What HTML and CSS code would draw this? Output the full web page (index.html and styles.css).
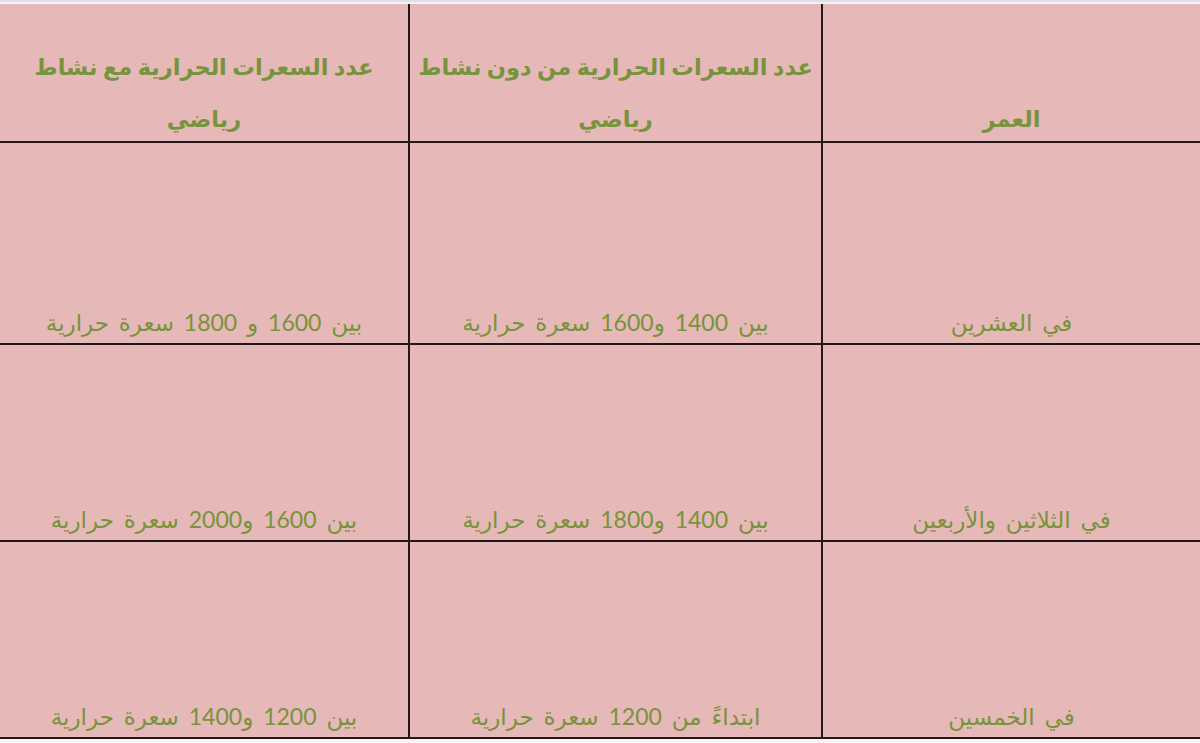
FILE: index.html
```html
<!DOCTYPE html>
<html lang="ar" dir="rtl">
<head>
<meta charset="utf-8">
<title>السعرات الحرارية حسب العمر</title>
<link rel="stylesheet" href="styles.css">
</head>
<body>
<div class="sheet">
  <div class="grid">
    <div class="cell head"><span>العمر</span></div>
    <div class="cell head two"><span>عدد السعرات الحرارية من دون نشاط<br>رياضي</span></div>
    <div class="cell head two"><span>عدد السعرات الحرارية مع نشاط<br>رياضي</span></div>

    <div class="cell"><span>في العشرين</span></div>
    <div class="cell"><span>بين 1400 و1600 سعرة حرارية</span></div>
    <div class="cell"><span>بين 1600 و 1800 سعرة حرارية</span></div>

    <div class="cell"><span>في الثلاثين والأربعين</span></div>
    <div class="cell"><span>بين 1400 و1800 سعرة حرارية</span></div>
    <div class="cell"><span>بين 1600 و2000 سعرة حرارية</span></div>

    <div class="cell"><span>في الخمسين</span></div>
    <div class="cell"><span>ابتداءً من 1200 سعرة حرارية</span></div>
    <div class="cell"><span>بين 1200 و1400 سعرة حرارية</span></div>
  </div>
</div>
</body>
</html>
```

FILE: styles.css
```css
html, body {
  margin: 0;
  padding: 0;
  background: #f6f6f8;
}

body {
  width: 1200px;
  height: 743px;
  overflow: hidden;
  font-family: "Lato", "DejaVu Sans", sans-serif;
}

.sheet {
  padding-top: 4px;
  background: linear-gradient(#dfe1ea 0, #dfe1ea 2px, #f4f4f7 2px);
  background-repeat: no-repeat;
  background-size: 100% 4px;
}

.grid {
  display: grid;
  direction: rtl;
  grid-template-columns: 377px 411px 1fr;
  grid-template-rows: 137px 200px 195px 195px;
  gap: 2px;
  padding-bottom: 2px;
  background: #231818;
}

.cell {
  background: #e6b8b7;
  color: #77933c;
  display: flex;
  flex-direction: column;
  justify-content: flex-end;
  align-items: center;
  text-align: center;
  font-size: 23px;
  line-height: 30px;
  word-spacing: 4px;
  padding-bottom: 6px;
  box-sizing: border-box;
}

.head {
  font-weight: bold;
  font-size: 22.5px;
  line-height: 52px;
  word-spacing: 0;
  padding-bottom: 0;
}

.head span {
  margin-bottom: -4px;
}
```
